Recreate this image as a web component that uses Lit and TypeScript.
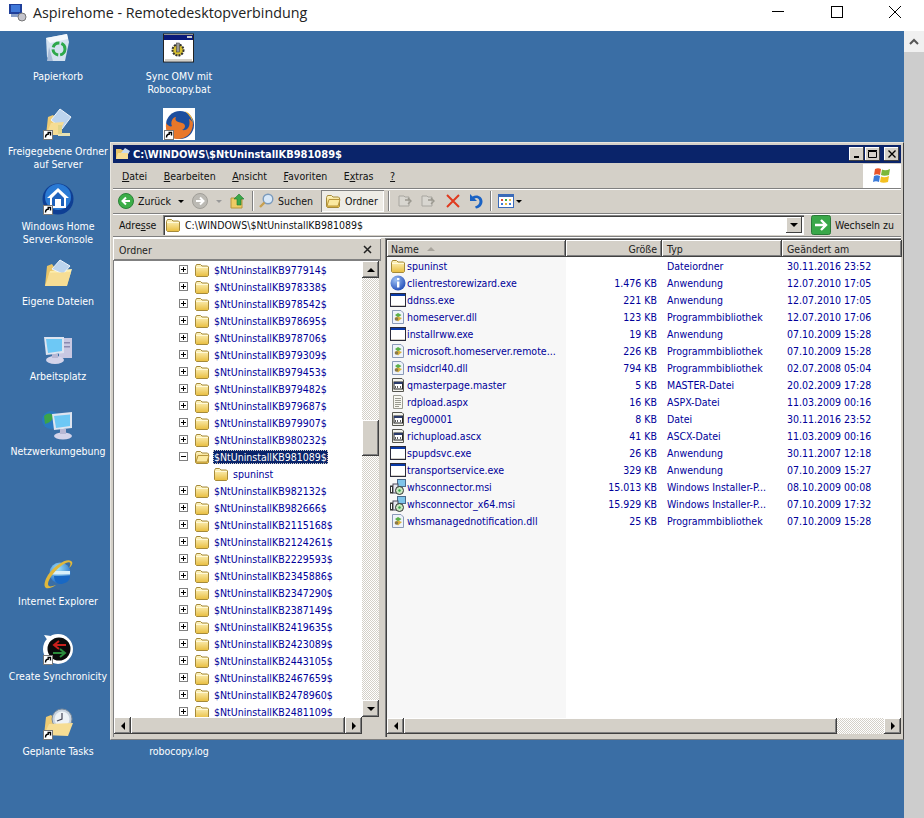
import { LitElement, html, css, svg } from "lit";
import { customElement } from "lit/decorators.js";

const folder = (open = false) => html`<svg class="ico" width="16" height="16" viewBox="0 0 16 16">
  <defs><linearGradient id="fg" x1="0" y1="0" x2="0" y2="1"><stop offset="0" stop-color="#fff7c8"/><stop offset="1" stop-color="#e8bd3e"/></linearGradient></defs>
  <path d="M1.5 4.5 L2.5 2.5 H6.5 L8 4 H13.5 L14.5 5 V13.5 L13.5 14.5 H2.5 L1.5 13.5 Z" fill="url(#fg)" stroke="#a58a3a"/>
  ${open
    ? svg`<path d="M2 13 L4 6.5 H15 L13 13 Z" fill="#fbe9a0" stroke="#b8963c"/>`
    : svg`<path d="M2 5.5 H14" stroke="#fff9d8" fill="none"/>`}
</svg>`;

const exeIcon = html`<svg class="ico" width="16" height="16" viewBox="0 0 16 16">
  <rect x="0.5" y="1.5" width="15" height="13" fill="#fff" stroke="#2b2b3b"/>
  <rect x="1" y="2" width="14" height="2" fill="#0a3aa8"/>
  <rect x="1" y="13" width="14" height="1" fill="#d4d0c8"/>
</svg>`;

const dllIcon = html`<svg class="ico" width="16" height="16" viewBox="0 0 16 16">
  <path d="M2.5 1.5 H11 L13.5 4 V14.5 H2.5 Z" fill="#eef3fb" stroke="#8a9ab8"/>
  <path d="M5 6 L8 4 L11.5 6 L8 8.5 Z" fill="#5cb04a"/>
  <path d="M4.5 9 L8 7.5 L12 9 L8 12.5 Z" fill="#d9b23c"/>
  <circle cx="6.5" cy="10" r="1.8" fill="#8a7a4a"/>
</svg>`;

const infoIcon = html`<svg class="ico" width="16" height="16" viewBox="0 0 16 16">
  <defs><radialGradient id="ib" cx="0.35" cy="0.3" r="0.8"><stop offset="0" stop-color="#9dc0f4"/><stop offset="1" stop-color="#1b45b4"/></radialGradient></defs>
  <circle cx="8" cy="8" r="7.5" fill="url(#ib)"/>
  <rect x="7" y="3" width="2.4" height="2.2" fill="#fff"/>
  <rect x="7" y="6.5" width="2.4" height="6" fill="#fff"/>
</svg>`;

const masterIcon = html`<svg class="ico" width="16" height="16" viewBox="0 0 16 16">
  <path d="M2.5 1.5 H12 L13.5 3 V14.5 H2.5 Z" fill="#f4f4ee" stroke="#55554e"/>
  <rect x="4" y="5" width="8.5" height="7" fill="#fff" stroke="#222"/>
  <rect x="4" y="5" width="8.5" height="2" fill="#2a3a6a"/>
  <path d="M6 9 L5 10 L6 11 M8 9 L7 10 L8 11 M10 9 L11 10 L10 11" stroke="#333" fill="none" stroke-width="0.8"/>
</svg>`;

const textIcon = html`<svg class="ico" width="16" height="16" viewBox="0 0 16 16">
  <path d="M3.5 1.5 H11 L12.5 3 V14.5 H3.5 Z" fill="#f7f7f0" stroke="#9a9a90"/>
  <path d="M5 4.5 H11 M5 6.5 H11 M5 8.5 H11 M5 10.5 H11 M5 12.5 H9" stroke="#9a9a90"/>
</svg>`;

const msiIcon = html`<svg class="ico" width="16" height="16" viewBox="0 0 16 16">
  <rect x="7.5" y="0.5" width="8" height="7" fill="#7fc4ea" stroke="#4a6a8a"/>
  <rect x="3" y="5" width="5" height="9" fill="#e6e6ee" stroke="#4a4a5a"/>
  <rect x="0.5" y="7" width="2" height="7" fill="#fff" stroke="#333"/>
  <circle cx="9.5" cy="11.5" r="4" fill="#c8e8c0" stroke="#333"/>
  <circle cx="9.5" cy="11.5" r="1.2" fill="#3aa04a"/>
</svg>`;

const fileIcons: Record<string, unknown> = {
  folder: folder(),
  info: infoIcon,
  exe: exeIcon,
  dll: dllIcon,
  master: masterIcon,
  text: textIcon,
  msi: msiIcon,
};

const shortcut = svg`<g><rect x="1.5" y="22.5" width="9" height="9" fill="#fff" stroke="#777"/><path d="M3.5 29.5 C3.5 27 5 26 7 26 M5.5 24.5 H8.5 V27.5" fill="none" stroke="#000" stroke-width="1.4"/></g>`;

const bigFolder = svg`
  <defs><linearGradient id="bf" x1="0" y1="0" x2="0" y2="1"><stop offset="0" stop-color="#fff3b8"/><stop offset="1" stop-color="#eec25a"/></linearGradient></defs>
  <path d="M3 28 L5 8 L10 6 L12 9 L22 9 L22 26 Z" fill="#e8c468"/>
  <path d="M3 28 L8 13 L30 11 L25 27 Z" fill="url(#bf)"/>`;

const desktopArt: Record<string, unknown> = {
  recycle: svg`<path d="M4 5 L25 1 L27 9 L23 28 H10 L5 24 Z" fill="#d4e2f0"/><path d="M4 5 L25 1 L26 6 L8 10 Z" fill="#f4f8fc"/><path d="M7 14 L11 28 H5 Z" fill="#a8bcd8"/><circle cx="17" cy="16" r="6" fill="none" stroke="#2da84a" stroke-width="3" stroke-dasharray="8 2"/>`,
  bat: svg`<rect x="0.5" y="1" width="30" height="28" fill="#fff" stroke="#222"/><rect x="1" y="2" width="29" height="5" fill="#0a1a7a"/><rect x="24" y="3" width="5" height="2" fill="#ccc"/><circle cx="15" cy="17" r="5.5" fill="#d8c030" stroke="#333" stroke-dasharray="2 1" stroke-width="2"/><rect x="13.5" y="10" width="3" height="9" fill="#999" stroke="#333" stroke-width="0.5"/><rect x="2" y="26" width="27" height="2" fill="#d4d0c8"/>`,
  firefox: svg`<rect x="0" y="0" width="32" height="32" fill="#fff"/><circle cx="17" cy="17" r="14" fill="#1d4e9e"/><path d="M30 15 C30 26 22 31 15 31 C6 31 2 24 3 15 C5 18 8 19 9 18 C7 14 10 9 13 9 C11 13 15 14 19 15 C23 16 23 20 19 22 C24 23 28 19 26 11 C28 12 29 13 30 15 Z" fill="#e8772a"/><path d="M22 3 C27 5 30 10 30 15 C28 9 25 6 22 3 Z" fill="#f5b335"/>`,
  shared: svg`<path d="M4 27 L6 9 L11 7 L14 10 L20 10 L20 26 Z" fill="#eecb74"/><path d="M9 12 L18 1 L29 9 L20 21 Z" fill="#bcd4ee" stroke="#eef4fb"/><path d="M4 27 L9 15 L22 14 L17 27 Z" fill="#f6dd94"/><rect x="16" y="25" width="12" height="3" fill="#e7e2b4"/><rect x="16" y="17" width="4" height="9" fill="#e2d488"/>`,
  home: svg`<circle cx="16" cy="16" r="15.5" fill="#0f3f94"/><circle cx="16" cy="14" r="13" fill="#2a7ad4"/><path d="M16 5 L27 15 H24 V25 H8 V15 H5 Z" fill="#fff"/><path d="M16 9 L22 15 V23 H19 V16 H13 V23 H10 V15 Z" fill="#1f62bc"/>`,
  docs: svg`${bigFolder}<path d="M10 11 L18 2 L28 8 L21 16 Z" fill="#bcd4ee" stroke="#eef4fb"/><path d="M3 28 L8 15 L29 14 L25 28 Z" fill="#f6dd94"/>`,
  computer: svg`<rect x="17" y="5" width="13" height="20" fill="#c8c8e2"/><rect x="21" y="9" width="7" height="1.5" fill="#8a8ab0"/><rect x="21" y="13" width="7" height="1.5" fill="#8a8ab0"/><path d="M2 4 L22 4 L22 20 L4 22 Z" fill="#dde4f0"/><path d="M4 6 L20 6 L20 18 L6 20 Z" fill="#6dc8f5"/><ellipse cx="13" cy="27" rx="9" ry="4" fill="#d4d4ea"/><rect x="10" y="21" width="6" height="4" fill="#b8b8d4"/>`,
  network: svg`<circle cx="9" cy="12" r="9" fill="#2a78c0"/><path d="M2 8 C6 4 10 5 12 9 C9 14 6 15 3 16 Z" fill="#3ca448"/><path d="M10 6 L30 4 L30 20 L12 22 Z" fill="#dde4f0"/><path d="M12 8 L28 6.5 L28 18 L14 20 Z" fill="#6dc8f5"/><ellipse cx="21" cy="28" rx="9" ry="3.5" fill="#d4d4ea"/><rect x="18" y="21" width="6" height="5" fill="#b8b8d4"/>`,
  ie: svg`<defs><radialGradient id="ieb" cx="0.4" cy="0.3" r="0.8"><stop offset="0" stop-color="#9fe0f8"/><stop offset="1" stop-color="#1560c0"/></radialGradient></defs><circle cx="18" cy="15" r="10.5" fill="url(#ieb)"/><rect x="9" y="13" width="19" height="3.5" fill="#d8f0fa"/><path d="M29 3 C25 0 13 7 6 17 C3 22 1 28 4 30 C7 31 11 29 14 27 C9 29 6 29 6 26 C6 21 15 9 24 5 C28 3 30 5 27 10 C31 7 31 4 29 3 Z" fill="#e0b83c"/><path d="M12 18 H28 C28 24 22 26 18 26 C14 26 12 22 12 18 Z" fill="#1868c4"/>`,
  sync: svg`<circle cx="16" cy="16" r="15" fill="#fff"/><circle cx="17" cy="16" r="11.5" fill="#0a0a0a"/><path d="M2 2 L9 3 L6 8 Z" fill="#fff"/><path d="M24 12 H13 M17 8 L12 12 L17 16" stroke="#c8201c" stroke-width="2" fill="none"/><path d="M11 20 H22 M18 16 L23 20 L18 24" stroke="#2a8a3a" stroke-width="2" fill="none"/>`,
  tasks: svg`<path d="M2 27 L4 9 L9 7 L12 10 L20 10 L22 27 Z" fill="#eecb74"/><circle cx="20" cy="11" r="10" fill="#c8d2de" stroke="#7a8a9a"/><circle cx="20" cy="11" r="7.5" fill="#eef2f6"/><path d="M20 5 V11 L15 13" stroke="#445" stroke-width="1.2" fill="none"/><path d="M2 27 L7 16 L31 15 L26 28 Z" fill="#f6dd94"/>`,
};

interface DesktopIcon { art?: string; label: string[]; x: number; y: number; link?: boolean }

const desktopIcons: DesktopIcon[] = [
  { art: "recycle", label: ["Papierkorb"], x: 58, y: 0 },
  { art: "bat", label: ["Sync OMV mit", "Robocopy.bat"], x: 179, y: 0 },
  { art: "shared", label: ["Freigegebene Ordner", "auf Server"], x: 58, y: 75, link: true },
  { art: "firefox", label: [], x: 179, y: 75, link: true },
  { art: "home", label: ["Windows Home", "Server-Konsole"], x: 58, y: 150, link: true },
  { art: "docs", label: ["Eigene Dateien"], x: 58, y: 225 },
  { art: "computer", label: ["Arbeitsplatz"], x: 58, y: 300 },
  { art: "network", label: ["Netzwerkumgebung"], x: 58, y: 375 },
  { art: "ie", label: ["Internet Explorer"], x: 58, y: 525 },
  { art: "sync", label: ["Create Synchronicity"], x: 58, y: 600, link: true },
  { art: "tasks", label: ["Geplante Tasks"], x: 58, y: 675, link: true },
  { label: ["robocopy.log"], x: 179, y: 675 },
];

const treeRows = [
  "977914", "978338", "978542", "978695", "978706", "979309", "979453", "979482", "979687", "979907",
  "980232", "981089", "*spuninst", "982132", "982666", "2115168", "2124261", "2229593", "2345886",
  "2347290", "2387149", "2419635", "2423089", "2443105", "2467659", "2478960", "2481109",
];

const files = [
  ["folder", "spuninst", "", "Dateiordner", "30.11.2016 23:52"],
  ["info", "clientrestorewizard.exe", "1.476 KB", "Anwendung", "12.07.2010 17:05"],
  ["exe", "ddnss.exe", "221 KB", "Anwendung", "12.07.2010 17:05"],
  ["dll", "homeserver.dll", "123 KB", "Programmbibliothek", "12.07.2010 17:06"],
  ["exe", "installrww.exe", "19 KB", "Anwendung", "07.10.2009 15:28"],
  ["dll", "microsoft.homeserver.remote...", "226 KB", "Programmbibliothek", "07.10.2009 15:28"],
  ["dll", "msidcrl40.dll", "794 KB", "Programmbibliothek", "02.07.2008 05:04"],
  ["master", "qmasterpage.master", "5 KB", "MASTER-Datei", "20.02.2009 17:28"],
  ["text", "rdpload.aspx", "16 KB", "ASPX-Datei", "11.03.2009 00:16"],
  ["master", "reg00001", "8 KB", "Datei", "30.11.2016 23:52"],
  ["master", "richupload.ascx", "41 KB", "ASCX-Datei", "11.03.2009 00:16"],
  ["exe", "spupdsvc.exe", "26 KB", "Anwendung", "30.11.2007 12:18"],
  ["exe", "transportservice.exe", "329 KB", "Anwendung", "07.10.2009 15:27"],
  ["msi", "whsconnector.msi", "15.013 KB", "Windows Installer-P...", "08.10.2009 00:08"],
  ["msi", "whsconnector_x64.msi", "15.929 KB", "Windows Installer-P...", "07.10.2009 17:32"],
  ["dll", "whsmanagednotification.dll", "25 KB", "Programmbibliothek", "07.10.2009 15:28"],
];

const arrow = (dir: string) => html`<span class="sb-btn"><i class="tri ${dir}"></i></span>`;

@customElement("app-root")
export class AppRoot extends LitElement {
  static styles = css`
    :host {
      display: flex;
      flex-direction: column;
      width: 924px;
      height: 818px;
      overflow: hidden;
      font: 10.5px "DejaVu Sans Condensed", "DejaVu Sans", sans-serif;
    }
    * { box-sizing: border-box; }
    .rdp-bar {
      height: 31px;
      flex: none;
      background: #fff;
      display: flex;
      align-items: center;
      padding: 0 0 7px 9px;
      font: 14.3px "Open Sans", sans-serif;
      color: #222;
    }
    .rdp-bar svg { margin-right: 6px; }
    .rdp-title { flex: 1; }
    .rdp-ctl { display: flex; gap: 46.5px; padding-right: 23px; }
    .rdp-ctl svg { margin-right: 0; }
    .main { flex: 1; display: flex; min-height: 0; }
    .desktop {
      position: relative;
      width: 904px;
      background: #3a6ea5;
      overflow: hidden;
    }
    .outer-sb { width: 20px; background: #cdcdcd; }
    .outer-up {
      height: 21px;
      background: #f0f0f0;
      display: flex;
      align-items: center;
      justify-content: center;
    }
    .dicon {
      position: absolute;
      width: 120px;
      margin-left: -60px;
      height: 75px;
      display: flex;
      flex-direction: column;
      align-items: center;
      color: #fff;
      line-height: 13px;
      text-align: center;
      white-space: nowrap;
    }
    .dicon svg { flex: none; margin-top: 2px; }
    .dicon .lbl { margin-top: 5px; }
    .dicon .blank { height: 32px; margin-top: 2px; }

    .window {
      position: absolute;
      left: 110px;
      top: 111px;
      width: 794px;
      height: 598px;
      background: #d4d0c8;
      border: 1px solid;
      border-color: #e8e6e0 #404040 #808080 #e8e6e0;
      padding: 2px;
      display: flex;
      flex-direction: column;
      color: #000;
    }
    .caption {
      height: 18px;
      flex: none;
      background: #0a246a;
      color: #fff;
      font-weight: bold;
      font-size: 11px;
      display: flex;
      align-items: center;
      padding: 0 2px;
      gap: 2px;
    }
    .caption .t { flex: 1; }
    .cap-btn {
      width: 15px;
      height: 14px;
      margin-left: -1px;
      background: #d4d0c8;
      box-shadow: inset -1px -1px #404040, inset 1px 1px #fff;
      display: flex;
      align-items: center;
      justify-content: center;
    }
    .cap-btn:last-child { margin-left: 2px; }
    .menubar {
      height: 26px;
      flex: none;
      display: flex;
      align-items: center;
      border-bottom: 1px solid #808080;
      box-shadow: 0 1px #fff;
      padding: 1px 0 0 9px;
      gap: 16.5px;
      color: #111;
    }
    .menubar .sp { flex: 1; }
    .flag {
      width: 38px;
      height: 24px;
      background: #fff;
      display: flex;
      align-items: center;
      justify-content: center;
    }
    .toolbar {
      height: 25px;
      flex: none;
      display: flex;
      align-items: center;
      padding-left: 5px;
      border-bottom: 1px solid #808080;
      box-shadow: 0 1px #fff;
      color: #111;
    }
    .toolbar svg { flex: none; }
    .caret { width: 6px; height: 3px; border: 3px solid transparent; border-top: 3px solid #000; border-bottom: 0; flex: none; }
    .caret.dim { border-top-color: #999; }
    .tsep { width: 1px; height: 20px; background: #808080; box-shadow: 1px 0 #fff; flex: none; }
    .tlabel { flex: none; }
    .zurueck { width: 40px; margin-left: 4px; }
    .suchen { width: 43px; margin-left: 4px; }
    .toggled {
      width: 63px;
      height: 22px;
      display: flex;
      align-items: center;
      gap: 4px;
      padding-left: 4px;
      background: #eeece6;
      box-shadow: inset 1px 1px #808080, inset -1px -1px #fff;
    }
    .ml2 { margin-left: 2px; }
    .ml4 { margin-left: 4px; }
    .ml5 { margin-left: 5px; }
    .ml6 { margin-left: 6px; }
    .ml7 { margin-left: 7px; }
    .ml8 { margin-left: 8px; }
    .ml9 { margin-left: 9px; }
    .addr {
      height: 23px;
      flex: none;
      display: flex;
      align-items: center;
      padding-left: 6px;
      color: #111;
      border-bottom: 1px solid #808080;
      box-shadow: 0 1px #fff;
    }
    .addr-label { width: 44px; flex: none; }
    .field {
      width: 641px;
      height: 20px;
      background: #fff;
      box-shadow: inset 1px 1px #808080, inset 2px 2px #404040, inset -1px -1px #fff;
      display: flex;
      align-items: center;
      padding-left: 2px;
      gap: 4px;
    }
    .field .p { flex: 1; }
    .field .dd {
      width: 16px;
      height: 16px;
      margin-right: 2px;
      background: #d4d0c8;
      box-shadow: inset -1px -1px #404040, inset 1px 1px #fff;
      display: flex;
      align-items: center;
      justify-content: center;
    }
    .go { display: flex; align-items: center; gap: 4px; margin-left: 7px; }
    .panes { flex: 1; min-height: 0; display: flex; margin-top: 1px; }
    .tree-pane {
      width: 268px;
      flex: none;
      display: flex;
      flex-direction: column;
    }
    .tree-head {
      height: 22px;
      flex: none;
      display: flex;
      align-items: center;
      justify-content: space-between;
      padding: 1px 9px 0 6px;
      box-shadow: inset 1px 1px #fff, inset -1px -1px #808080;
      color: #222;
    }
    .tree-body {
      flex: 1;
      min-height: 0;
      display: grid;
      grid-template-columns: 1fr 17px;
      grid-template-rows: 1fr 17px;
      box-shadow: inset 1px 1px #808080;
      padding: 1px 2px 3px 1px;
    }
    .tree { background: #fff; overflow: hidden; padding-left: 65px; min-height: 0; }
    .trow {
      height: 17px;
      display: flex;
      align-items: center;
      color: #00009a;
      white-space: nowrap;
    }
    .box {
      width: 9px;
      height: 9px;
      border: 1px solid #808080;
      margin-right: 6px;
      position: relative;
      flex: none;
    }
    .box::before { content: ""; position: absolute; left: 1px; top: 3px; width: 5px; height: 1px; background: #000; }
    .box.plus::after { content: ""; position: absolute; left: 3px; top: 1px; width: 1px; height: 5px; background: #000; }
    .trow .ico { margin-right: 3px; flex: none; }
    .trow .name { padding: 1px; }
    .trow.sel .name { background: #0a246a; color: #fff; outline: 1px dotted #d4d0c8; outline-offset: -1px; }
    .trow.child { padding-left: 34px; }

    .sb-btn {
      width: 17px;
      height: 17px;
      flex: none;
      background: #d4d0c8;
      box-shadow: inset -1px -1px #404040, inset 1px 1px #fff, inset -2px -2px #808080;
      display: flex;
      align-items: center;
      justify-content: center;
    }
    .tri { width: 0; height: 0; border: 4px solid transparent; display: block; box-sizing: content-box; }
    .tri.up { border-bottom-color: #000; border-top: 0; }
    .tri.down { border-top-color: #000; border-bottom: 0; }
    .tri.left { border-right-color: #000; border-left: 0; }
    .tri.right { border-left-color: #000; border-right: 0; }
    .track {
      background-color: #f1efe9;
      background-image: conic-gradient(#d4d0c8 25%, #fff 0 50%, #d4d0c8 0 75%, #fff 0);
      background-size: 2px 2px;
      display: flex;
      min-height: 0;
    }
    .track.v { flex-direction: column; }
    .thumb {
      background: #d4d0c8;
      box-shadow: inset -1px -1px #404040, inset 1px 1px #fff, inset -2px -2px #808080;
      flex: none;
    }
    .v .spacer { height: 142px; flex: none; }
    .v .thumb { height: 36px; }
    .v .fill { flex: 1; min-height: 0; }
    .tree-h { display: flex; }
    .tree-h .thumb { flex: 1; }
    .corner { background: #d4d0c8; }

    .splitter { width: 4px; flex: none; }
    .list-pane {
      flex: 1;
      min-width: 0;
      display: flex;
      flex-direction: column;
      box-shadow: inset 1px 1px #808080, inset 2px 2px #404040;
      padding: 2px 0 0 2px;
      background: #d4d0c8;
    }
    .cols { display: grid; grid-template-columns: 179px 96px 120px 120px; }
    .heads { height: 17px; flex: none; }
    .heads > div {
      box-shadow: inset -1px -1px #404040, inset 1px 1px #fff, inset -2px -2px #808080;
      background: #d4d0c8;
      color: #222;
      display: flex;
      align-items: center;
      padding: 0 5px;
      gap: 8px;
    }
    .heads > div:first-child { padding-left: 4px; }
    .heads .r { justify-content: flex-end; }
    .sort { width: 8px; height: 4px; border: 4px solid transparent; border-bottom: 4px solid #a8a49c; border-top: 0; }
    .list-wrap { flex: 1; min-height: 0; background: #fff; display: flex; flex-direction: column; }
    .list { flex: 1; min-height: 0; background: linear-gradient(to right, #f7f7f7 179px, #fff 179px); }
    .frow { height: 17px; color: #00009a; white-space: nowrap; }
    .frow > div { display: flex; align-items: center; padding: 0 5px; min-width: 0; }
    .frow > div:first-child { padding: 0 0 0 3px; gap: 1px; }
    .frow .r { justify-content: flex-end; }
    .list-h { height: 16px; flex: none; display: flex; background: #fff; }
    .list-h .sb-btn { height: 16px; }
    .list-h .thumb { width: 433px; }
    .list-h .track { flex: 1; }
    .tail { height: 3px; flex: none; }
  `;

  render() {
    return html`
      <div class="rdp-bar">
        <svg width="18" height="20" viewBox="0 0 18 20">
          <rect x="0" y="2" width="13" height="10" fill="#1f3f9a"/>
          <rect x="2" y="3" width="9" height="7" fill="#3f78d8"/>
          <rect x="2" y="12" width="14" height="3" fill="#8aa0c8"/>
          <circle cx="13" cy="15" r="4" fill="#c4c4cc" stroke="#777"/>
        </svg>
        <span class="rdp-title">Aspirehome - Remotedesktopverbindung</span>
        <div class="rdp-ctl">
          <svg width="12" height="12" viewBox="0 0 12 12"><path d="M0 5.5 H12" stroke="#000"/></svg>
          <svg width="12" height="12" viewBox="0 0 12 12"><rect x="0.5" y="0.5" width="11" height="11" fill="none" stroke="#000"/></svg>
          <svg width="12" height="12" viewBox="0 0 12 12"><path d="M0 0 L12 12 M12 0 L0 12" stroke="#000"/></svg>
        </div>
      </div>
      <div class="main">
        <div class="desktop">
          ${desktopIcons.map(
            (d) => html`
              <div class="dicon" style="left:${d.x}px;top:${d.y}px">
                ${d.art
                  ? html`<svg width="32" height="32" viewBox="0 0 32 32">${desktopArt[d.art]}${d.link ? shortcut : ""}</svg>`
                  : html`<div class="blank"></div>`}
                <div class="lbl">${d.label.map((l) => html`<div>${l}</div>`)}</div>
              </div>
            `
          )}
          ${this.renderWindow()}
        </div>
        <div class="outer-sb">
          <div class="outer-up">
            <svg width="10" height="7" viewBox="0 0 10 7"><path d="M1 6 L5 2 L9 6" fill="none" stroke="#555" stroke-width="2"/></svg>
          </div>
        </div>
      </div>
    `;
  }

  renderWindow() {
    return html`
      <div class="window">
        <div class="caption">
          <svg width="16" height="16" viewBox="0 0 16 16">
            <path d="M1 3 H6 L7 4 H13 V13 H1 Z" fill="#e8c468"/>
            <path d="M6 7 L10 2 L15 5 L12 10 Z" fill="#c8dcf0"/>
            <path d="M1 13 L3 7 H13 L13 13 Z" fill="#f6dd94"/>
          </svg>
          <span class="t">C:\\WINDOWS\\$NtUninstallKB981089$</span>
          <span class="cap-btn"><svg width="8" height="8" viewBox="0 0 8 8"><rect x="1" y="6" width="5" height="2"/></svg></span>
          <span class="cap-btn"><svg width="9" height="8" viewBox="0 0 9 8"><path d="M0.5 1.5 H8.5 V7.5 H0.5 Z M0 0.5 H9" fill="none" stroke="#000"/></svg></span>
          <span class="cap-btn"><svg width="8" height="8" viewBox="0 0 8 8"><path d="M0.5 0.5 L7.5 7.5 M7.5 0.5 L0.5 7.5" stroke="#000" stroke-width="1.4"/></svg></span>
        </div>
        <div class="menubar">
          <span><u>D</u>atei</span>
          <span><u>B</u>earbeiten</span>
          <span><u>A</u>nsicht</span>
          <span><u>F</u>avoriten</span>
          <span>E<u>x</u>tras</span>
          <span><u>?</u></span>
          <span class="sp"></span>
          <div class="flag">
            <svg width="20" height="20" viewBox="0 0 20 20">
              <path d="M3 3 C5 2 7 2 9 3 L8 9 C6 8 4 8 2 9 Z" fill="#e8552a"/>
              <path d="M10 3.5 C12 4.5 15 4.5 18 3 L17 9 C14 10 11 10 9 9 Z" fill="#7cb83a"/>
              <path d="M2 10 C4 9 6 9 8 10 L7 16 C5 15 3 15 1 16 Z" fill="#3a7ad8"/>
              <path d="M9 10.5 C11 11.5 14 11.5 17 10 L16 16 C13 17 10 17 8 16 Z" fill="#f4c020"/>
            </svg>
          </div>
        </div>
        ${this.renderToolbar()}
        <div class="addr">
          <span class="addr-label">Adre<u>s</u>se</span>
          <div class="field">
            ${folder()}
            <span class="p">C:\\WINDOWS\\$NtUninstallKB981089$</span>
            <span class="dd"><i class="tri down"></i></span>
          </div>
          <div class="go">
            <svg width="20" height="20" viewBox="0 0 20 20">
              <rect x="0.5" y="0.5" width="19" height="19" rx="2" fill="#3aa84a" stroke="#2a7a38"/>
              <path d="M4 10 H15 M10 5 L15 10 L10 15" fill="none" stroke="#fff" stroke-width="2.4"/>
            </svg>
            <span>Wechseln zu</span>
          </div>
        </div>
        <div class="panes">
          ${this.renderTree()}
          <div class="splitter"></div>
          ${this.renderList()}
        </div>
      </div>
    `;
  }

  renderToolbar() {
    const disabled = svg`<path d="M2 3 H7 L8 4 H12 V13 H2 Z" fill="#d8d6d0" stroke="#a8a6a0"/><path d="M8 7 H13 M11 5 L14 8 L11 11" fill="none" stroke="#9a988f" stroke-width="1.4"/>`;
    return html`
      <div class="toolbar">
        <svg width="16" height="16" viewBox="0 0 16 16">
          <circle cx="8" cy="8" r="7.5" fill="#3cae48" stroke="#2a8238"/>
          <path d="M12 8 H5 M8 4.5 L4.5 8 L8 11.5" fill="none" stroke="#fff" stroke-width="2"/>
        </svg>
        <span class="tlabel zurueck">Zurück</span>
        <i class="caret"></i>
        <svg class="ml8" width="16" height="16" viewBox="0 0 16 16">
          <circle cx="8" cy="8" r="7.5" fill="#bcbab4" stroke="#a09e98"/>
          <path d="M4 8 H11 M8 4.5 L11.5 8 L8 11.5" fill="none" stroke="#fff" stroke-width="2"/>
        </svg>
        <i class="caret dim ml8"></i>
        <svg class="ml8" width="16" height="16" viewBox="0 0 16 16">
          <path d="M1 5 H6 L7 6 H12 V15 H1 Z" fill="#eecb64" stroke="#b8963c"/>
          <path d="M9 1 L14 6 H11 V12 H7 V6 H4 Z" fill="#3aa84a" stroke="#1f7a2c" stroke-width="0.6"/>
        </svg>
        <i class="tsep ml6"></i>
        <svg class="ml5" width="16" height="16" viewBox="0 0 16 16">
          <circle cx="10" cy="6" r="4.8" fill="#d8e8f8" stroke="#7a9abc" stroke-width="1.4"/>
          <path d="M6.5 9.5 L2 14" stroke="#c8a050" stroke-width="2.4"/>
        </svg>
        <span class="tlabel suchen">Suchen</span>
        <div class="toggled">${folder(true)}<span>Ordner</span></div>
        <i class="tsep ml4"></i>
        <svg class="ml8" width="16" height="16" viewBox="0 0 16 16">${disabled}</svg>
        <svg class="ml7" width="16" height="16" viewBox="0 0 16 16">${disabled}</svg>
        <svg class="ml9" width="16" height="16" viewBox="0 0 16 16">
          <path d="M2 2 L14 14 M14 2 L2 14" stroke="#e03a1e" stroke-width="2"/>
        </svg>
        <svg class="ml6" width="16" height="16" viewBox="0 0 16 16">
          <path d="M3 1 V8 H10 L7.5 5.5 C10 4 12.5 6 12.5 8.5 C12.5 11 10.5 13 8 13.5 L9 15.5 C13 15 15.5 12 15.5 8.5 C15.5 3.5 10 1 5.5 3.5 Z" fill="#1a62c4"/>
        </svg>
        <i class="tsep ml7"></i>
        <svg class="ml7" width="16" height="16" viewBox="0 0 16 16">
          <rect x="0.5" y="1.5" width="15" height="13" fill="#fff" stroke="#3a6ab8"/>
          <rect x="1" y="2" width="14" height="2" fill="#3a6ab8"/>
          <rect x="3" y="6" width="2" height="2" fill="#d84a3a"/><rect x="7" y="6" width="2" height="2" fill="#3aa84a"/><rect x="11" y="6" width="2" height="2" fill="#e8b83a"/>
          <rect x="3" y="10" width="2" height="2" fill="#3a7ad8"/><rect x="7" y="10" width="2" height="2" fill="#e8b83a"/><rect x="11" y="10" width="2" height="2" fill="#3a7ad8"/>
        </svg>
        <i class="caret ml2"></i>
      </div>
    `;
  }

  renderTree() {
    return html`
      <div class="tree-pane">
        <div class="tree-head">
          <span>Ordner</span>
          <svg width="9" height="9" viewBox="0 0 9 9"><path d="M1 1 L8 8 M8 1 L1 8" stroke="#222" stroke-width="1.5"/></svg>
        </div>
        <div class="tree-body">
          <div class="tree">
            ${treeRows.map((r) => {
              if (r.startsWith("*")) {
                return html`<div class="trow child">${folder()}<span class="name">${r.slice(1)}</span></div>`;
              }
              const sel = r === "981089";
              return html`<div class="trow ${sel ? "sel" : ""}">
                <span class="box ${sel ? "" : "plus"}"></span>
                ${folder(sel)}
                <span class="name">$NtUninstallKB${r}$</span>
              </div>`;
            })}
          </div>
          <div class="track v">
            ${arrow("up")}
            <div class="spacer"></div>
            <div class="thumb"></div>
            <div class="fill"></div>
            ${arrow("down")}
          </div>
          <div class="tree-h">${arrow("left")}<div class="thumb"></div>${arrow("right")}</div>
          <div class="corner"></div>
        </div>
      </div>
    `;
  }

  renderList() {
    return html`
      <div class="list-pane">
        <div class="cols heads">
          <div>Name <i class="sort"></i></div>
          <div class="r">Größe</div>
          <div>Typ</div>
          <div>Geändert am</div>
        </div>
        <div class="list-wrap">
          <div class="list">
            ${files.map(
              (f) => html`<div class="cols frow">
                <div>${fileIcons[f[0]]}<span>${f[1]}</span></div>
                <div class="r">${f[2]}</div>
                <div>${f[3]}</div>
                <div>${f[4]}</div>
              </div>`
            )}
          </div>
          <div class="list-h">
            ${arrow("left")}
            <div class="thumb"></div>
            <div class="track"></div>
            ${arrow("right")}
          </div>
        </div>
        <div class="tail"></div>
      </div>
    `;
  }
}
